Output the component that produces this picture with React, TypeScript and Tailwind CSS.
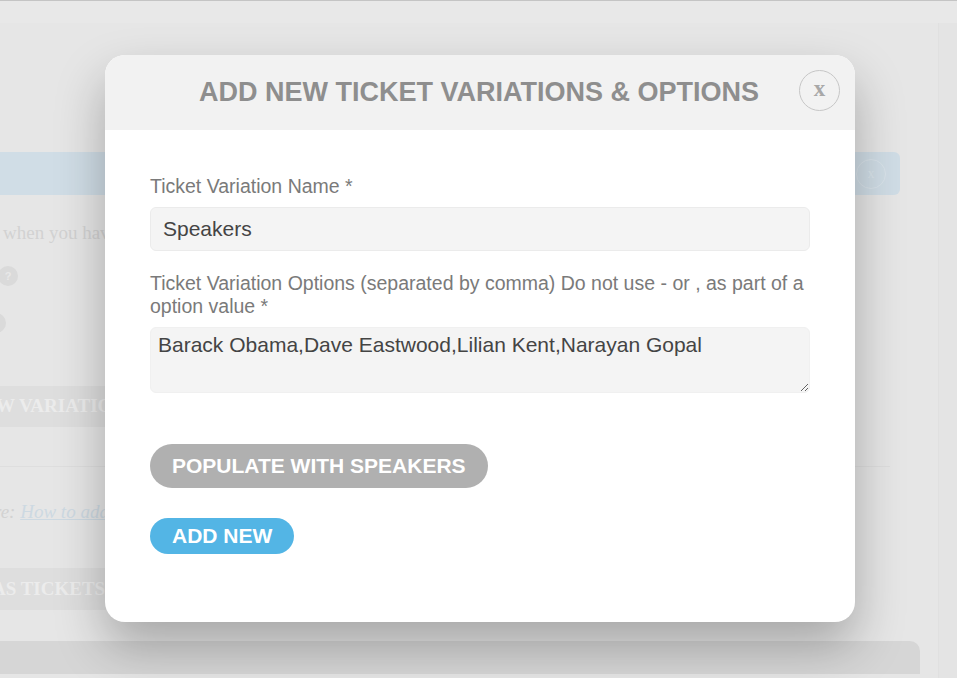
import React from "react";

export default function App() {
  return (
    <div className="relative h-[678px] w-[957px] overflow-hidden bg-[#e6e6e6] [font-family:'Liberation_Sans',Arial,sans-serif]">
      {/* Background page (dimmed) */}
      <div className="flex h-full flex-col border-t border-[#c4c4c4]">
        <div className="h-[22px] bg-[#e8e8e8]" />
        <div className="flex flex-1">
          <div className="flex w-[938px] flex-col bg-[#e6e6e6]">
            <div className="h-[129px]" />
            <div className="flex h-[43px] w-[900px] items-center justify-end rounded-r-[6px] bg-[#d0dde6] pr-[14px]">
              <div className="flex h-[30px] w-[30px] items-center justify-center rounded-full border border-[#dbe5ec] text-[14px] text-[#dbe5ec] [font-family:'Liberation_Serif',serif]">
                x
              </div>
            </div>
            <div className="mt-[26px] pl-[3px] text-[19px] leading-[24px] text-[#d2d2d2] [font-family:'Liberation_Serif',serif]">
              when you have
            </div>
            <div className="mt-[21px] ml-[-2px] flex h-[20px] w-[20px] items-center justify-center rounded-full bg-[#dadada] text-[11px] font-bold text-[#e8e8e8]">
              ?
            </div>
            <div className="mt-[27px] ml-[-14px] h-[20px] w-[20px] rounded-full bg-[#dadada]" />
            <div className="mt-[53px] flex h-[41px] w-[700px] items-center overflow-hidden whitespace-nowrap bg-[#dedede] pl-0 text-[19px] font-bold text-[#ececec] [font-family:'Liberation_Serif',serif]">
              <span className="ml-[-4px]">W VARIATIONS</span>
            </div>
            <div className="mt-[39px] w-[890px] border-t border-[#dedede]" />
            <div className="mt-[33px] whitespace-nowrap text-[19px] italic leading-[24px] text-[#d2d2d2] [font-family:'Liberation_Serif',serif]">
              <span className="ml-[-6px]">re: </span>
              <span className="text-[#cdd9e2] underline">How to add</span>
            </div>
            <div className="mt-[44px] flex h-[42px] w-[700px] items-center overflow-hidden whitespace-nowrap bg-[#dedede] text-[19px] font-bold text-[#ececec] [font-family:'Liberation_Serif',serif]">
              <span className="ml-[-8px]">AS TICKETS</span>
            </div>
            <div className="mt-[31px] h-[33px] w-[920px] rounded-tr-[10px] bg-[#d6d6d6]" />
          </div>
          <div className="flex-1 border-l border-[#e0e0e0] bg-[#e4e4e4]" />
        </div>
      </div>

      {/* Modal */}
      <div className="absolute left-[105px] top-[55px] flex h-[567px] w-[750px] flex-col overflow-hidden rounded-[20px] bg-white shadow-[0_24px_50px_rgba(0,0,0,0.28)]">
        <div className="relative flex h-[75px] items-center justify-center bg-[#f2f2f2]">
          <h2 className="mr-[2px] whitespace-nowrap text-[27px] font-bold text-[#8e8e8e]">
            ADD NEW TICKET VARIATIONS &amp; OPTIONS
          </h2>
          <div className="absolute right-[15px] top-[15px] flex h-[41px] w-[41px] items-center justify-center rounded-full border border-[#c6c6c6] pb-[3px] text-[23px] font-bold text-[#a8a8a8] [font-family:'Liberation_Serif',serif]">
            x
          </div>
        </div>
        <div className="flex flex-col px-[45px] pt-[45px]">
          <label className="text-[19.5px] leading-[23px] text-[#7a7a7a]">
            Ticket Variation Name *
          </label>
          <div className="mt-[9px] flex h-[44px] items-center rounded-[6px] border border-[#ebebeb] bg-[#f4f4f4] px-[12px] text-[21px] text-[#444]">
            Speakers
          </div>
          <label className="mt-[21px] text-[19.5px] leading-[23px] text-[#7a7a7a]">
            Ticket Variation Options (separated by comma) Do not use - or , as part of a option value *
          </label>
          <textarea
            readOnly
            defaultValue="Barack Obama,Dave Eastwood,Lilian Kent,Narayan Gopal"
            className="mt-[9px] h-[66px] rounded-[6px] border border-[#f0f0f0] bg-[#f4f4f4] px-[7px] pt-[4px] text-[21px] leading-[26px] text-[#444] outline-none [font-family:'Liberation_Sans',Arial,sans-serif]"
          />
          <div className="mt-[51px] flex">
            <button className="flex h-[44px] items-center rounded-full bg-[#b0b0b0] px-[22px] text-[21px] font-bold text-white">
              POPULATE WITH SPEAKERS
            </button>
          </div>
          <div className="mt-[30px] flex">
            <button className="flex h-[36px] items-center rounded-full bg-[#53b5e5] px-[22px] text-[21px] font-bold text-white">
              ADD NEW
            </button>
          </div>
        </div>
      </div>
    </div>
  );
}
